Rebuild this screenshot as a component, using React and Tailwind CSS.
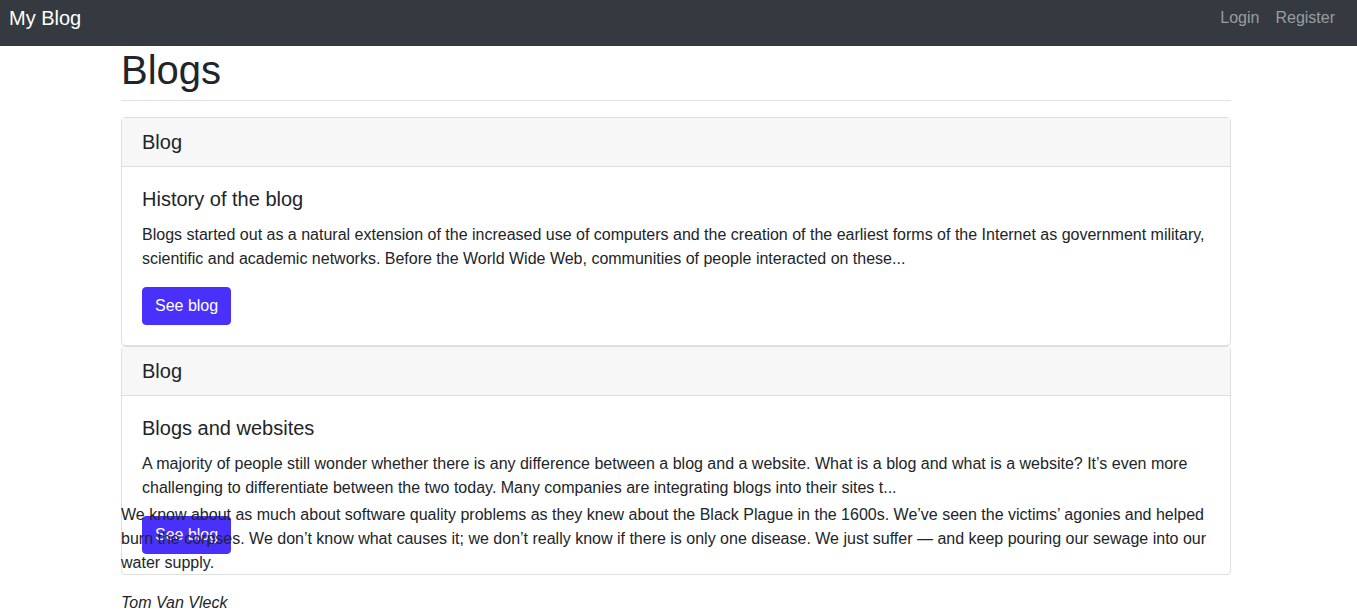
const posts = [
  {
    id: 1,
    title: "History of the blog",
    excerpt:
      "Blogs started out as a natural extension of the increased use of computers and the creation of the earliest forms of the Internet as government military, scientific and academic networks. Before the World Wide Web, communities of people interacted on these...",
  },
  {
    id: 2,
    title: "Blogs and websites",
    excerpt:
      "A majority of people still wonder whether there is any difference between a blog and a website. What is a blog and what is a website? It\u2019s even more challenging to differentiate between the two today. Many companies are integrating blogs into their sites t...",
  },
];

function Navbar() {
  return (
    <nav className="flex h-[46px] items-start justify-between bg-[#343a40] pl-[9px] pr-[14px]">
      <a href="#" className="pt-[3px] text-[20px] leading-[30px] text-white">
        My Blog
      </a>
      <div className="flex pt-[6px]">
        <a href="#" className="px-2 text-base leading-6 text-[#9a9da0]">
          Login
        </a>
        <a href="#" className="px-2 text-base leading-6 text-[#9a9da0]">
          Register
        </a>
      </div>
    </nav>
  );
}

function BlogCard({ post }) {
  return (
    <article className="rounded border border-[#dfdfdf] bg-white">
      <header className="border-b border-[#dfdfdf] bg-[#f7f7f7] px-5 py-3 text-[20px] leading-6">Blog</header>
      <div className="p-5">
        <h5 className="mb-3 text-[20px] leading-6">{post.title}</h5>
        <p className="mb-4 text-base leading-6">{post.excerpt}</p>
        <button type="button" className="rounded border border-[#4931fb] bg-[#4931fb] px-3 py-[6px] text-base leading-6 text-white">
          See blog
        </button>
      </div>
    </article>
  );
}

export default function App() {
  return (
    <div className="relative min-h-[615px] bg-white font-['Liberation_Sans',Arial,sans-serif] text-[#212529]">
      <Navbar />
      <main className="ml-[121px] w-[1110px]">
        <h1 className="mb-[6px] text-[40px] leading-[48px]">Blogs</h1>
        <hr className="mb-4 border-t border-[#dee2e6]" />
        {posts.map((post) => (
          <BlogCard key={post.id} post={post} />
        ))}
      </main>
      <footer className="absolute left-[121px] top-[503px] w-[1110px]">
        <p className="mb-4 text-base leading-6">
          We know about as much about software quality problems as they knew about the Black Plague in the 1600s. We&#8217;ve seen the victims&#8217; agonies and helped burn the corpses. We don&#8217;t know what causes it; we don&#8217;t really know if there is only one disease. We just suffer &#8212; and keep pouring our sewage into our water supply.
        </p>
        <p className="text-base italic leading-6">Tom Van Vleck</p>
      </footer>
    </div>
  );
}
